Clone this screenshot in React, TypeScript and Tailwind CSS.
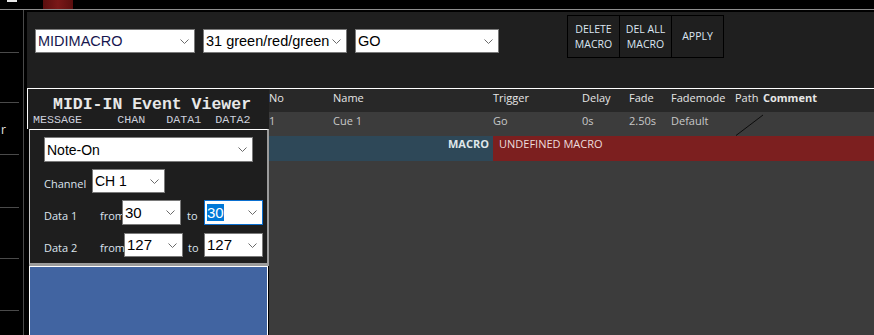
import React from 'react'

const ui = "font-['Open_Sans',sans-serif]"
const arial = "font-['Liberation_Sans',Arial,sans-serif]"
const mono = "font-['Liberation_Mono','Courier_New',monospace]"

function Chevron() {
  return (
    <svg width="9" height="5" viewBox="0 0 9 5" className="shrink-0">
      <polyline points="0.5,0.5 4.5,4.5 8.5,0.5" fill="none" stroke="#6b6b6b" strokeWidth="1" />
    </svg>
  )
}

function Select({
  value,
  className = '',
  size = 'text-[14px]',
  color = 'text-black',
  focused = false,
}: {
  value: string
  className?: string
  size?: string
  color?: string
  focused?: boolean
}) {
  return (
    <div
      className={`relative z-10 flex items-center justify-between bg-white border pl-[2px] pr-[5px] ${
        focused ? 'border-[#0a6fd0]' : 'border-[#7a7a7a]'
      } ${className}`}
    >
      <span className={`${arial} ${size} ${color} leading-[16px] whitespace-nowrap`}>
        {focused ? <span className="bg-[#0078d7] text-white">{value}</span> : value}
      </span>
      <Chevron />
    </div>
  )
}

function Label({ children, className = '' }: { children: React.ReactNode; className?: string }) {
  return (
    <span className={`${ui} text-[11px] leading-[15px] text-[#dde4ee] pb-[2px] whitespace-nowrap ${className}`}>
      {children}
    </span>
  )
}

function ToolButton({ lines, first = false }: { lines: string[]; first?: boolean }) {
  return (
    <div className={`flex-1 flex items-center justify-center ${first ? '' : 'border-l border-black'}`}>
      <div className="flex flex-col items-center">
        {lines.map((l) => (
          <span key={l} className="block whitespace-nowrap">
            {l}
          </span>
        ))}
      </div>
    </div>
  )
}

const cols = ['w-[64px]', 'w-[160px]', 'w-[89px]', 'w-[47px]', 'w-[42px]', 'w-[64px]', 'w-[28px]']

export default function App() {
  return (
    <div className="w-[874px] h-[335px] bg-black overflow-hidden flex flex-col">
      {/* window strip */}
      <div className="h-[9px] shrink-0 flex items-start">
        <div className="ml-[7px] w-[10px] h-[2px] bg-[#e8e8e8]" />
        <div className="ml-[26px] w-[30px] h-[9px] bg-gradient-to-r from-[#5a0e0e] via-[#7a1818] to-[#5a0e0e]" />
      </div>
      <div className="h-px shrink-0 bg-[#8e8e8e]" />

      <div className="flex flex-1 min-h-0">
        {/* left strip */}
        <div className="w-[23px] flex flex-col">
          <div className="h-[43px] w-[19px] border-b border-[#4a4a4a]" />
          <div className="h-[50px] w-[19px] border-b border-[#4a4a4a]" />
          <div className={`h-[52px] w-[19px] border-b border-[#4a4a4a] pt-[19px] pl-[1px] ${ui} text-[12px] leading-[16px] text-[#e6e6e6]`}>
            r
          </div>
          <div className="h-[53px] w-[19px] border-b border-[#4a4a4a]" />
          <div className="h-[51px] w-[19px] border-b border-[#4a4a4a]" />
          <div className="h-[52px] w-[19px] border-b border-[#4a4a4a]" />
        </div>
        <div className="w-px bg-[#4a4a4a]" />
        <div className="w-[3px]" />

        {/* main */}
        <div className="flex-1 flex flex-col pt-[2px] min-w-0">
          {/* toolbar */}
          <div className="h-[76px] shrink-0 bg-[#1f1f1f] flex items-start pl-[8px]">
            <Select value="MIDIMACRO" size="text-[14.5px]" className="mt-[17px] w-[160px] h-[24px]" color="text-[#16164e]" />
            <Select value="31 green/red/green" size="text-[14.5px]" className="mt-[17px] ml-[8px] w-[144px] h-[24px]" />
            <Select value="GO" size="text-[14.5px]" className="mt-[17px] ml-[8px] w-[144px] h-[24px]" />
            <div className={`mt-[3px] ml-[68px] w-[157px] h-[43px] flex border border-black ${ui} text-[10.5px] leading-[14.3px] text-[#dce6f2] text-center`}>
              <ToolButton first lines={['DELETE', 'MACRO']} />
              <ToolButton lines={['DEL ALL', 'MACRO']} />
              <ToolButton lines={['APPLY']} />
            </div>
          </div>
          <div className="h-px shrink-0 bg-white" />

          <div className="flex flex-1 min-h-0">
            {/* MIDI-IN viewer */}
            <div className="w-[242px] flex flex-col">
              <div className="h-[40px] shrink-0 border-l border-white bg-[#1e1e1e] pt-[7px]">
                <div className={`${mono} font-bold text-[16.5px] leading-[18px] text-[#e8e8e8] pl-[25px] whitespace-nowrap`}>
                  MIDI-IN Event Viewer
                </div>
                <div className={`${mono} text-[11.7px] leading-[12px] text-[#cdd0dc] pl-[5px] whitespace-pre`}>
                  {'MESSAGE     CHAN   DATA1  DATA2'}
                </div>
              </div>

              <div className="ml-[2px] w-[240px] h-[137px] shrink-0 bg-[#1e1e1e] border-t border-t-white border-l border-l-[#c4c4c4] border-r-2 border-r-[#9c9c9c] border-b-[3px] border-b-[#9c9c9c] flex flex-col pl-[14px] pt-[7px]">
                <Select value="Note-On" className="w-[209px] h-[25px]" />
                <div className="mt-[7px] h-[24px] flex items-end">
                  <Label className="w-[48px]">Channel</Label>
                  <Select value="CH 1" className="w-[73px] h-[24px]" />
                </div>
                <div className="mt-[7px] h-[25px] flex items-end">
                  <Label className="w-[56px]">Data 1</Label>
                  <Label className="w-[22px]">from</Label>
                  <Select value="30" size="text-[15px]" className="w-[59px] h-[25px]" />
                  <Label className="ml-[6px] w-[17px]">to</Label>
                  <Select value="30" size="text-[15px]" focused className="w-[59px] h-[25px]" />
                </div>
                <div className="mt-[8px] h-[24px] flex items-end">
                  <Label className="w-[56px]">Data 2</Label>
                  <Label className="w-[24px]">from</Label>
                  <Select value="127" size="text-[15px]" className="w-[59px] h-[24px]" />
                  <Label className="ml-[5px] w-[16px]">to</Label>
                  <Select value="127" size="text-[15px]" className="w-[59px] h-[24px]" />
                </div>
              </div>

              <div className="ml-[2px] w-[239px] flex-1 bg-[#4164a1] border-l border-t border-r border-white" />
            </div>

            {/* cue table */}
            <div className={`flex-1 flex flex-col ${ui} text-[11px] leading-[15px] min-w-0`}>
              <div className="h-[23px] shrink-0 bg-[#282828] flex pt-[1px] text-[#e6e6e6] whitespace-nowrap">
                {['No', 'Name', 'Trigger', 'Delay', 'Fade', 'Fademode', 'Path'].map((h, i) => (
                  <div key={h} className={cols[i]}>
                    {h}
                  </div>
                ))}
                <div className="flex-1 font-bold">Comment</div>
              </div>
              <div className="h-[24px] shrink-0 bg-[#3c3c3c] flex pt-[1px] text-[#c8c8c8] whitespace-nowrap">
                {['1', 'Cue 1', 'Go', '0s', '2.50s', 'Default'].map((v, i) => (
                  <div key={i} className={cols[i]}>
                    {v}
                  </div>
                ))}
                <div className="relative w-[28px]">
                  <svg width="30" height="24" viewBox="0 0 30 24" className="absolute left-0 top-[-1px]">
                    <line x1="1" y1="23.5" x2="28" y2="3" stroke="#0c0c0c" strokeWidth="1" />
                  </svg>
                </div>
                <div className="flex-1" />
              </div>
              <div className="h-[25px] shrink-0 flex">
                <div className="w-[224px] bg-[#2e4858] text-right pr-[4px] font-bold text-[#dfe6ea]">MACRO</div>
                <div className="flex-1 bg-[#7c1f1f] pl-[6px] text-[#ecdcdc]">UNDEFINED MACRO</div>
              </div>
              <div className="flex-1 bg-[#3c3c3c]" />
            </div>
          </div>
        </div>
      </div>
    </div>
  )
}
